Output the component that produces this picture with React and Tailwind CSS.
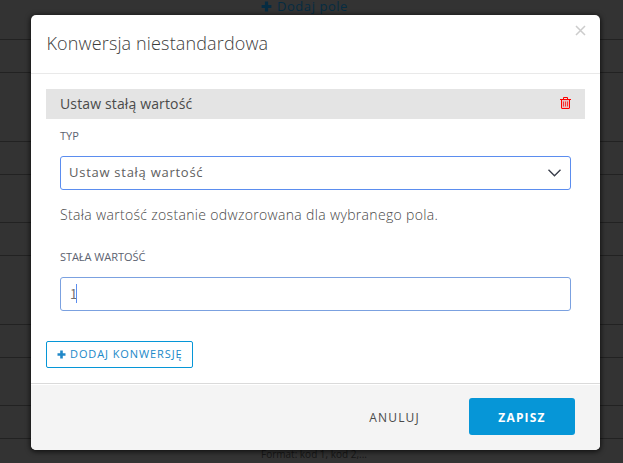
const ROWS = [
  'h-10', 'h-[33px]', 'h-[69px]', 'h-[33px]', 'h-12', 'h-[33px]',
  'h-[69px]', 'h-[33px]', 'h-12', 'h-[33px]',
];

function Plus({ className }) {
  return (
    <svg className={className} viewBox="0 0 9 9" fill="currentColor">
      <path d="M3.2 0.5h2.6v2.7h2.7v2.6H5.8v2.7H3.2V5.8H0.5V3.2h2.7z" />
    </svg>
  );
}

function Trash() {
  return (
    <svg className="mb-[2px] h-3 w-[11px]" viewBox="0 0 11 12" fill="none" stroke="#ff0000">
      <path d="M0 2.5h11M3.5 2V0.5h4V2M1.5 3v8q0 .5.5.5h7q.5 0 .5-.5V3" />
      <path d="M3.5 4.5v5M5.5 4.5v5M7.5 4.5v5" strokeOpacity="0.7" />
      <path d="M2 3h7v8H2z" fill="#ff0000" fillOpacity="0.15" stroke="none" />
    </svg>
  );
}

function Background() {
  return (
    <div className="absolute inset-0 overflow-hidden bg-[#333333]">
      <div className="flex flex-col">
        {ROWS.map((h, i) => (
          <div key={i} className={`${h} shrink-0 border-b border-[#222222]`} />
        ))}
      </div>
      <div className="absolute top-0 left-[261px] flex h-[12px] items-center gap-[5px] text-[13px] leading-[12px] font-medium tracking-[0.55px] whitespace-nowrap text-[#062c42]">
        <Plus className="size-[11px]" />
        <span>Dodaj pole</span>
      </div>
      <div className="absolute top-[446px] left-[261px] text-[10px] leading-4 whitespace-nowrap text-[#171717]">
        Format: kod 1, kod 2,...
      </div>
    </div>
  );
}

export default function App() {
  return (
    <div className="relative h-[463px] w-[623px] overflow-hidden pt-[15px] pl-[31px] font-['Open_Sans',sans-serif]">
      <Background />
      <div className="relative flex h-[435px] w-[569px] flex-col overflow-hidden rounded-[5px] bg-white shadow-[0_1px_5px_1px_rgba(0,0,0,0.65)]">
        <header className="flex h-[59px] shrink-0 justify-between border-b border-[#e9e9e9] pr-[14px] pl-[15.5px]">
          <h1 className="pt-[14px] text-[18px] leading-7 font-light tracking-[0.14px] text-[#3c3c3c]">
            Konwersja niestandardowa
          </h1>
          <svg className="mt-[10px] size-[11px]" viewBox="0 0 11 11" stroke="#cccccc" strokeWidth="1.5">
            <path d="M1 1l9 9M10 1l-9 9" />
          </svg>
        </header>

        <main className="flex flex-1 flex-col items-start px-[15px] pt-[15px]">
          <div className="flex h-[30px] w-full items-center justify-between bg-[#e4e4e4] pr-[14px] pl-[14px] text-[14px] text-[#4a4a4a]">
            <span className="leading-5 tracking-[0.14px]">Ustaw stałą wartość</span>
            <Trash />
          </div>
          <div className="flex w-full flex-col px-[14px]">
            <label className="mt-[9px] h-4 text-[11px] leading-4 text-[#5b6270]">TYP</label>
            <div className="mt-3 flex h-[34px] items-center justify-between rounded-[3px] border border-[#5b8def] pr-[9px] pl-2 text-[13px] text-[#606060]">
              <span className="mb-[2px] leading-5 tracking-[0.73px]">Ustaw stałą wartość</span>
              <svg className="h-2 w-[13px]" viewBox="0 0 13 8" fill="none" stroke="#3b3f4c" strokeWidth="1.4">
                <path d="M0.5 0.8l6 6 6-6" />
              </svg>
            </div>
            <p className="mt-[15px] h-5 text-[14px] leading-5 font-light tracking-[0.33px] whitespace-nowrap text-[#484848]">
              Stała wartość zostanie odwzorowana dla wybranego pola.
            </p>
            <label className="mt-6 h-4 text-[11px] leading-4 tracking-[-0.06px] text-[#5b6270]">STAŁA WARTOŚĆ</label>
            <div className="mt-3 flex h-[34px] items-center rounded-[3px] border border-[#7ba1e0] pl-[9px] text-[13px] text-[#707070]">
              <span className="mb-px w-[6px] font-['Noto_Sans_CJK_SC',sans-serif] leading-5">1</span>
              <i className="mb-px h-[19px] w-px bg-[#5b8def]" />
            </div>
          </div>
          <button className="mt-[30px] flex h-[27px] w-[147px] items-center rounded-[2px] border border-[#0696d7] pl-[10px] text-[11px] tracking-[0.9px] whitespace-nowrap text-[#2088c8]">
            <Plus className="mr-[4px] size-[9px]" />
            <span className="mb-[2px] leading-4">DODAJ KONWERSJĘ</span>
          </button>
        </main>

        <footer className="flex h-[67px] shrink-0 items-center justify-end border-t border-[#dadada] bg-[#f4f4f4] pr-[25px] pb-px shadow-[inset_0_1px_0_#ffffff]">
          <button className="mr-[49px] pt-[3px] text-[12px] leading-4 tracking-[1.2px] text-[#4a4a4a]">ANULUJ</button>
          <button className="h-[37px] w-[106px] rounded-[3px] bg-[#0696d7] pt-[2px] text-[12px] leading-4 font-bold tracking-[1.2px] text-white">
            ZAPISZ
          </button>
        </footer>
      </div>
    </div>
  );
}
